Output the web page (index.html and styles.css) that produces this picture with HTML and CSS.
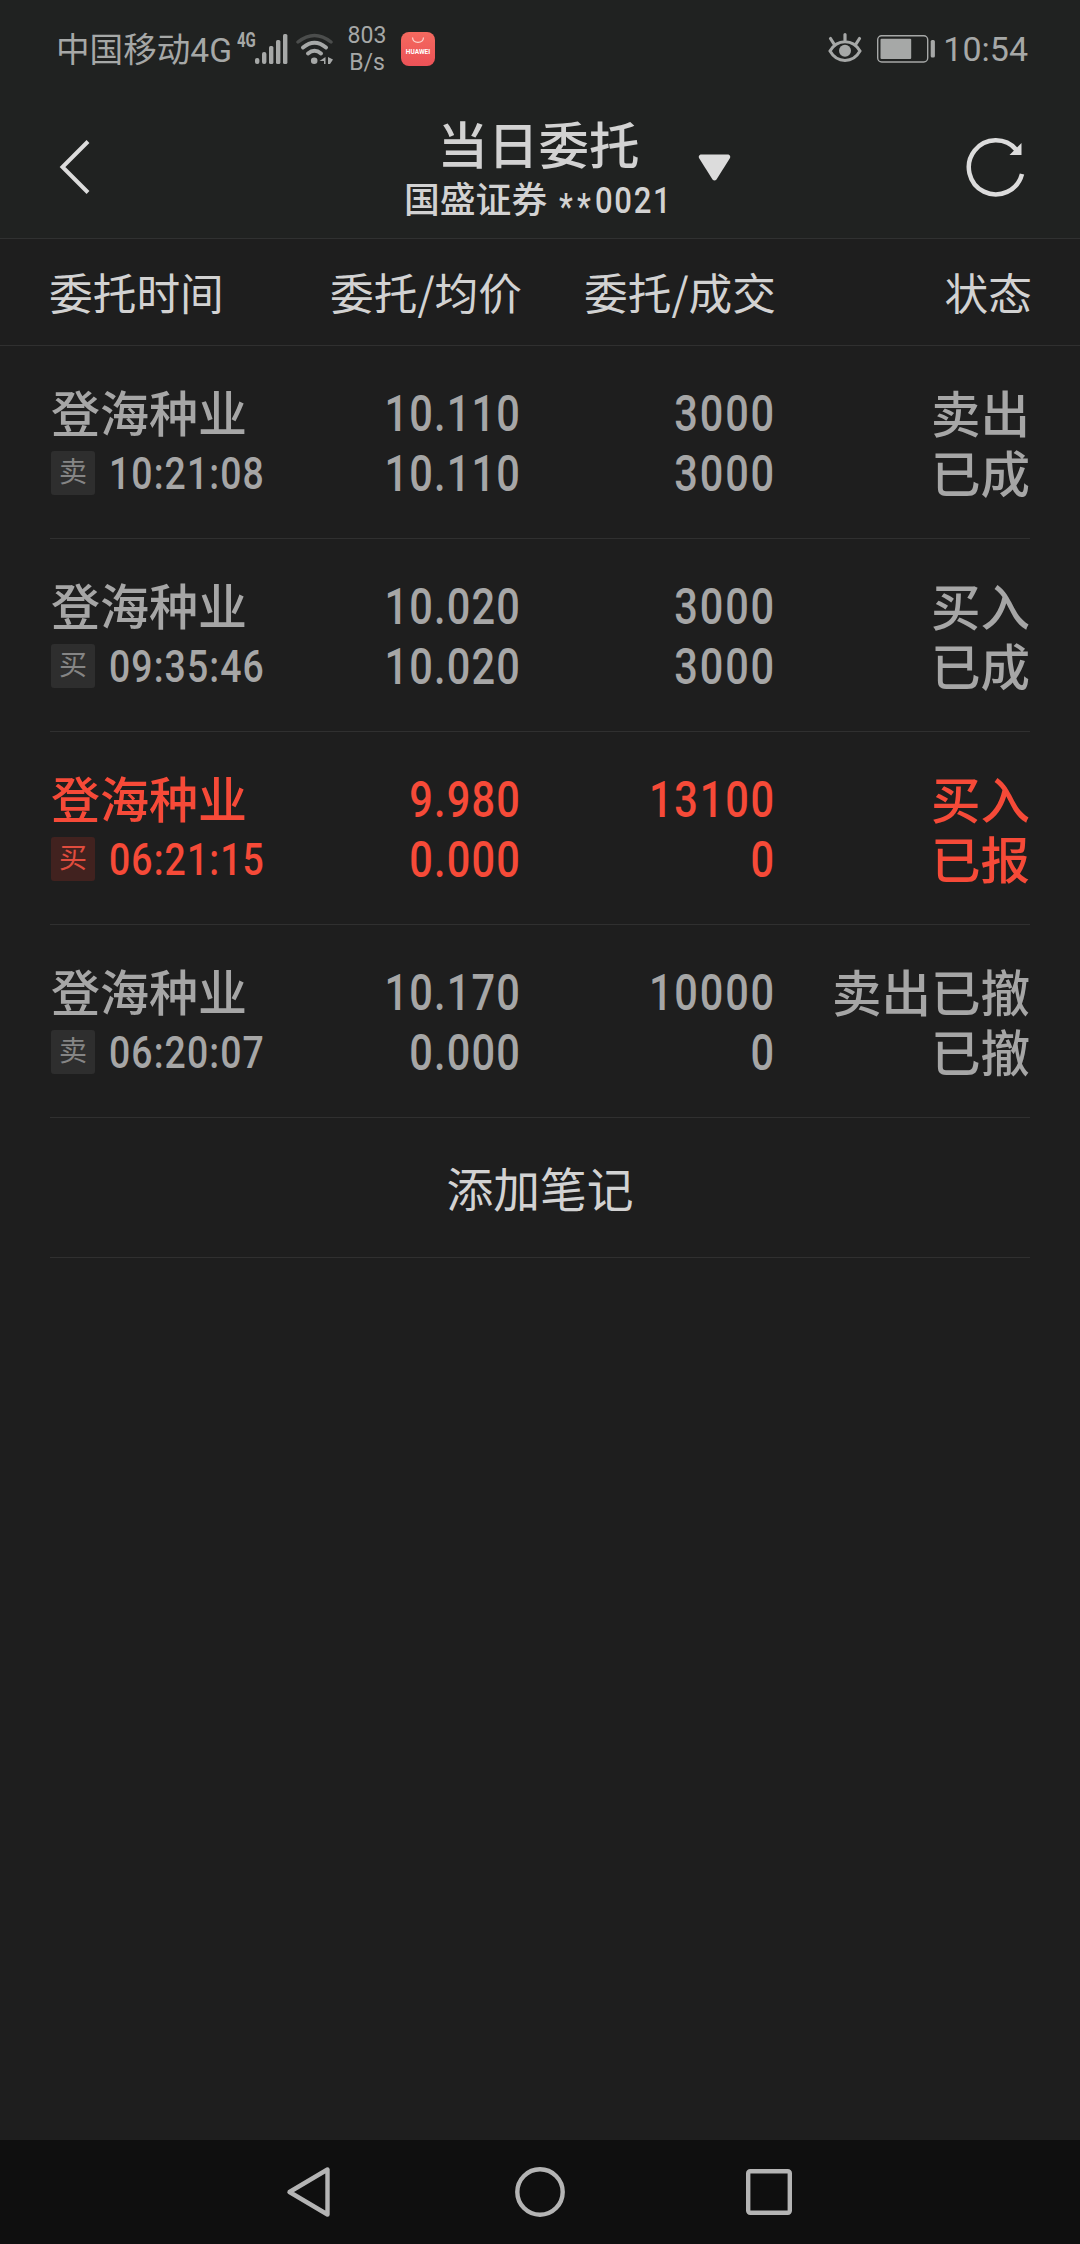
FILE: index.html
```
<!DOCTYPE html>
<html lang="zh-CN">
<head>
    <meta charset="UTF-8">
    <meta name="viewport" content="width=device-width, initial-scale=1.0">
    <title>当日委托</title>
    <link rel="stylesheet" href="styles.css">
</head>
<body>
    <div class="status-bar">
        <span class="carrier">中国移动4G</span>
        <span class="net-type">4G</span>
        <svg class="signal" width="33" height="32" viewBox="0 0 33 32" fill="#a6a8a7">
            <rect x="0" y="25" width="4.4" height="6" rx="2"/>
            <rect x="7" y="19" width="4.4" height="12" rx="2"/>
            <rect x="14" y="13" width="4.4" height="18" rx="1.5"/>
            <rect x="21" y="7" width="4.4" height="24" rx="1.5"/>
            <rect x="28" y="1" width="4.4" height="30" rx="1.5"/>
        </svg>
        <svg class="wifi" width="38" height="32" viewBox="0 0 38 32" fill="none" stroke-width="4" stroke-linecap="round">
            <path d="M2 9 Q18.500 -4 35 9" stroke="#4b4d4c" stroke-width="3.500"/>
            <path d="M7 14.500 Q18.500 5 30 14.500" stroke="#a6a8a7"/>
            <path d="M12 20.500 Q18.500 15 25 20.500" stroke="#a6a8a7"/>
            <circle cx="18.200" cy="27.700" r="3.300" fill="#a6a8a7"/>
            <path d="M29.500 24 v7 h-1.500 v-3 h-4.500 z M32 31 v-7 l5 2.500 l-3 4.500 z" fill="#a6a8a7"/>
        </svg>
        <div class="speed">803<br>B/s</div>
        <div class="app-icon">
            <svg width="14" height="7" viewBox="0 0 14 7" fill="none" stroke="#fbd5d0" stroke-width="1.200">
                <path d="M1.500 0.500 C2 7 12 7 12.500 0.500"/>
            </svg>
            <span>HUAWEI</span>
        </div>
        <svg class="eye" width="34" height="32" viewBox="0 0 34 32" fill="none" stroke="#a6a8a7" stroke-width="3.200" stroke-linecap="round">
            <path d="M2 19 C9 6.500 25 6.500 32 19 C25 31.500 9 31.500 2 19 Z" stroke-width="3"/>
            <path d="M17 2.500 V8 M2.500 6.500 L6 12 M31.500 6.500 L28 12"/>
            <circle cx="17" cy="18.800" r="6" fill="#a6a8a7" stroke="none"/>
        </svg>
        <svg class="battery" width="58" height="28" viewBox="0 0 58 28">
            <rect x="0.700" y="0.700" width="50" height="26.300" rx="4" fill="none" stroke="#a6a8a7" stroke-width="1.400"/>
            <rect x="3.500" y="3.700" width="30.700" height="20.300" rx="1" fill="#a6a8a7"/>
            <rect x="53.700" y="5" width="4.200" height="17.500" rx="1.500" fill="#a6a8a7"/>
        </svg>
        <span class="clock">10:54</span>
    </div>

    <div class="header">
        <div class="header-left">
            <svg width="32" height="56" viewBox="0 0 32 56" fill="none" stroke="#dcdcdc" stroke-width="4">
                <path d="M29 2.500 L3.500 28 L29 53.500"/>
            </svg>
        </div>
        <div class="title">
            <h1>当日委托</h1>
            <p>国盛证券 <span class="account"><span class="mask">**</span>0021</span></p>
        </div>
        <div class="header-right">
            <svg width="33" height="27" viewBox="0 0 33 27" fill="#dcdcdc">
                <path d="M2.500 0.500 H30.500 Q33 1.500 32 4 L18.500 25.500 Q16.500 27.500 14.500 25.500 L1 4 Q0 1.500 2.500 0.500 Z"/>
            </svg>
            <svg width="60" height="60" viewBox="0 0 60 60">
                <path d="M56 37 A27 27 0 1 1 50.500 13" fill="none" stroke="#dcdcdc" stroke-width="4.500"/>
                <path d="M55.500 6 V18 H43.500 Z" fill="#dcdcdc"/>
            </svg>
        </div>
    </div>

    <div class="columns">
        <span>委托时间</span>
        <span>委托/均价</span>
        <span>委托/成交</span>
        <span>状态</span>
    </div>

    <div class="orders">
        <div class="order">
            <div class="stock">
                <div class="name">登海种业</div>
                <div class="time"><span class="tag">卖</span><span class="num">10:21:08</span></div>
            </div>
            <div class="price"><span class="num">10.110</span><span class="num">10.110</span></div>
            <div class="amount"><span class="num">3000</span><span class="num">3000</span></div>
            <div class="state">卖出<br>已成</div>
        </div>
        <div class="order">
            <div class="stock">
                <div class="name">登海种业</div>
                <div class="time"><span class="tag">买</span><span class="num">09:35:46</span></div>
            </div>
            <div class="price"><span class="num">10.020</span><span class="num">10.020</span></div>
            <div class="amount"><span class="num">3000</span><span class="num">3000</span></div>
            <div class="state">买入<br>已成</div>
        </div>
        <div class="order active">
            <div class="stock">
                <div class="name">登海种业</div>
                <div class="time"><span class="tag">买</span><span class="num">06:21:15</span></div>
            </div>
            <div class="price"><span class="num">9.980</span><span class="num">0.000</span></div>
            <div class="amount"><span class="num">13100</span><span class="num">0</span></div>
            <div class="state">买入<br>已报</div>
        </div>
        <div class="order">
            <div class="stock">
                <div class="name">登海种业</div>
                <div class="time"><span class="tag">卖</span><span class="num">06:20:07</span></div>
            </div>
            <div class="price"><span class="num">10.170</span><span class="num">0.000</span></div>
            <div class="amount"><span class="num">10000</span><span class="num">0</span></div>
            <div class="state">卖出已撤<br>已撤</div>
        </div>
        <div class="add-note">添加笔记</div>
    </div>

    <div class="nav-bar">
        <svg width="46" height="52" viewBox="0 0 46 52" fill="none" stroke="#b4b4b4" stroke-width="4.400" stroke-linejoin="round">
            <path d="M41.500 3.500 V48.500 L3.500 26 Z"/>
        </svg>
        <svg width="52" height="52" viewBox="0 0 52 52" fill="none" stroke="#b4b4b4" stroke-width="4.400">
            <circle cx="27" cy="26" r="22.700"/>
        </svg>
        <svg width="46" height="46" viewBox="0 0 46 46" fill="none" stroke="#b4b4b4" stroke-width="4.400">
            <rect x="2.200" y="2.200" width="41.600" height="41.600" rx="2"/>
        </svg>
    </div>
</body>
</html>
```

FILE: styles.css
```
* {
    box-sizing: border-box;
}

body {
    margin: 0;
    height: 2244px;
    display: flex;
    flex-direction: column;
    background-color: #1e1e1e;
    color: #d2d2d2;
    font-family: Roboto, "Noto Sans CJK SC", sans-serif;
    overflow: hidden;
}

svg {
    display: block;
    flex: none;
}

/* status bar */
.status-bar {
    display: flex;
    align-items: center;
    height: 96px;
    padding: 0 52px 0 56px;
    background-color: #202221;
    color: #a6a8a7;
    white-space: nowrap;
}

.carrier {
    width: 181px;
    padding-top: 5px;
    font-size: 33.6px;
    line-height: 91px;
}

.net-type {
    width: 18px;
    font-size: 20px;
    font-weight: 700;
    line-height: 20px;
    margin-bottom: 16px;
    transform: scaleX(0.75);
    transform-origin: left;
}

.signal {
    margin-top: 1px;
}

.wifi {
    margin: 1px 0 0 8px;
}

.speed {
    width: 40px;
    margin: 2px 0 0 13px;
    font-size: 23px;
    line-height: 27px;
    text-align: center;
}

.app-icon {
    display: flex;
    flex-direction: column;
    align-items: center;
    width: 34px;
    height: 34px;
    margin: 2px auto 0 14px;
    padding-top: 5px;
    border-radius: 8px;
    background: linear-gradient(#f4695f, #ec5257);
    color: #fff;
}

.app-icon span {
    margin-top: 4px;
    font-size: 6.5px;
    font-weight: 700;
    line-height: 8px;
}

.battery {
    margin: 1px 0 0 15px;
}

.clock {
    margin: 2px 0 0 8px;
    font-size: 34px;
    line-height: 40px;
}

/* title area */
.header {
    display: grid;
    grid-template-columns: 1fr 262px 1fr;
    align-items: center;
    height: 143px;
    border-bottom: 1px solid #303131;
    background-color: #202221;
}

.header-left {
    padding-left: 59px;
}

.title {
    padding-top: 11px;
    text-align: center;
    white-space: nowrap;
}

.title h1 {
    margin: 0 0 0 -3px;
    font-size: 50.5px;
    font-weight: 500;
    line-height: 57px;
}

.title p {
    margin: 0 0 0 -5px;
    font-size: 35.8px;
    font-weight: 500;
    line-height: 52px;
}

.account {
    display: inline-block;
    width: 112px;
    text-align: left;
    font-size: 37px;
    letter-spacing: 2px;
    transform: scaleX(0.84);
    transform-origin: left;
    margin-left: 3px;
}

.mask {
    position: relative;
    top: 6px;
    letter-spacing: 5px;
}

.header-right {
    display: flex;
    align-items: center;
    justify-content: space-between;
    padding: 0 54px 0 27px;
}

/* table head */
.columns {
    display: grid;
    grid-template-columns: 223px 250px 254px 256px;
    height: 107px;
    padding-left: 49px;
    border-bottom: 1px solid #303030;
    font-family: "Noto Sans CJK SC", sans-serif;
    font-size: 43.7px;
    line-height: 105px;
    white-space: nowrap;
}

.columns span + span {
    text-align: right;
}

/* order list */
.orders {
    flex: 1;
    padding: 0 50px;
}

.order {
    display: grid;
    grid-template-columns: 220px 250px 254px 256px;
    height: 193px;
    padding-top: 38px;
    border-bottom: 1px solid #303030;
    color: #a6a6a6;
    font-size: 49.5px;
    font-weight: 500;
    line-height: 60px;
    white-space: nowrap;
}

.name {
    height: 60px;
    padding-left: 1px;
    font-size: 49px;
}

.name,
.state {
    padding-top: 2px;
}

.num {
    display: block;
    height: 60px;
    font-family: Roboto, sans-serif;
    font-size: 50px;
    font-weight: 500;
    transform: scaleX(0.83);
    transform-origin: right;
}

.price,
.amount,
.state {
    text-align: right;
}

.price .num {
    letter-spacing: 1.4px;
    margin-right: -1px;
}

.amount .num {
    letter-spacing: 2.2px;
    margin-right: -2px;
}

.time {
    display: flex;
    align-items: center;
    height: 60px;
    padding-left: 1px;
}

.time .num {
    margin-left: 14px;
    font-size: 44.5px;
    letter-spacing: 1.3px;
    transform: scaleX(0.84);
    transform-origin: left;
}

.tag {
    flex: none;
    width: 44px;
    height: 44px;
    margin-bottom: 3px;
    border-radius: 3px;
    background-color: #2e2e2e;
    color: #858585;
    font-size: 28px;
    font-weight: 400;
    line-height: 43px;
    text-align: center;
}

.active {
    color: #f64a38;
}

.active .tag {
    background-color: #41221f;
    color: #e04c3d;
}

.add-note {
    height: 140px;
    padding-top: 4px;
    border-bottom: 1px solid #303030;
    font-size: 46.8px;
    line-height: 139px;
    text-align: center;
}

/* system navigation */
.nav-bar {
    display: flex;
    align-items: center;
    justify-content: space-between;
    height: 104px;
    padding: 0 288px 0 286px;
    background-color: #0f0f0f;
}
```
